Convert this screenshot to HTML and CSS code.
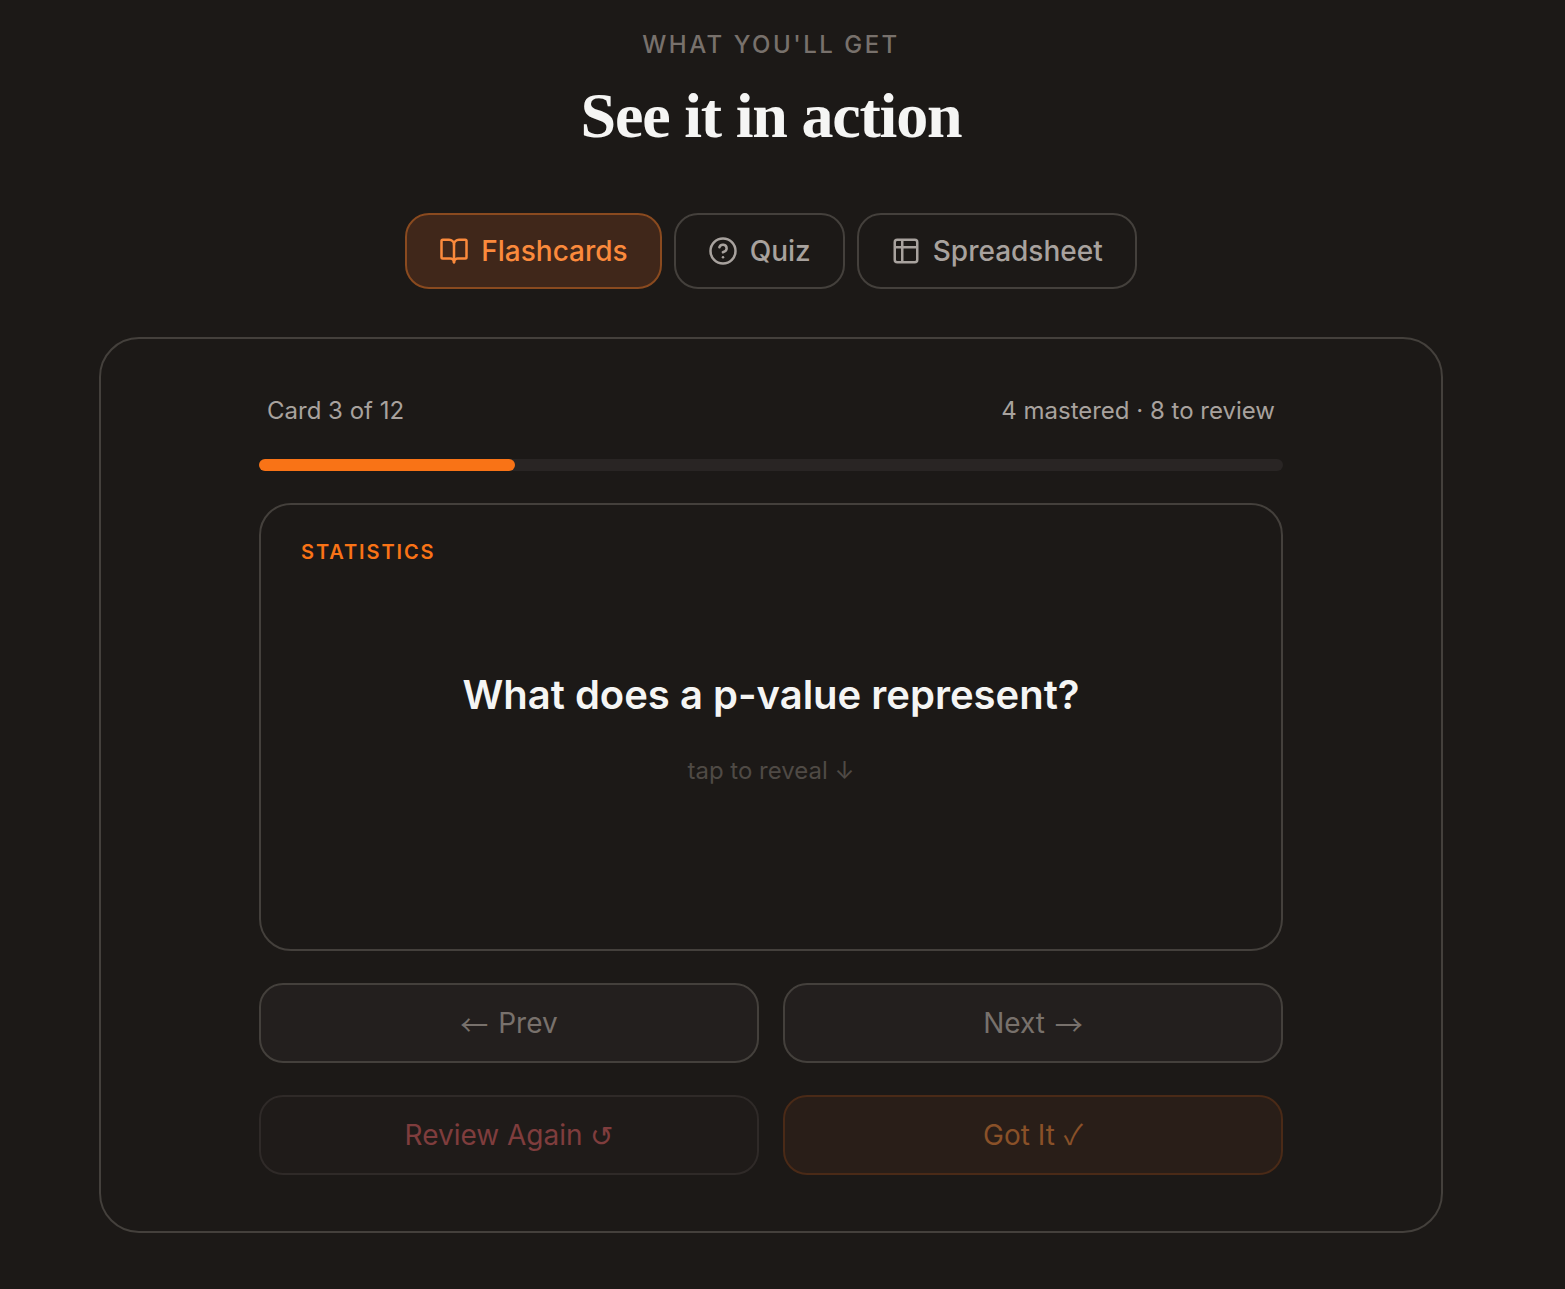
FILE: index.html
```html
<!DOCTYPE html>
<html>
<head>
  <title>See it in action</title>
  <link rel="stylesheet" href="styles.css">
</head>
<body>
  <section class="demo">
    <p class="eyebrow">WHAT YOU'LL GET</p>
    <h1 class="title">See it in action</h1>

    <div class="tabs">
      <button class="tab active">
        <svg class="tab-icon" viewBox="0 0 24 24"><path d="M12 7v14"/><path d="M3 18a1 1 0 0 1-1-1V4a1 1 0 0 1 1-1h5a4 4 0 0 1 4 4 4 4 0 0 1 4-4h5a1 1 0 0 1 1 1v13a1 1 0 0 1-1 1h-6a3 3 0 0 0-3 3 3 3 0 0 0-3-3z"/></svg>
        Flashcards
      </button>
      <button class="tab">
        <svg class="tab-icon" viewBox="0 0 24 24"><circle cx="12" cy="12" r="10"/><path d="M9.09 9a3 3 0 0 1 5.83 1c0 2-3 3-3 3"/><path d="M12 17h.01"/></svg>
        Quiz
      </button>
      <button class="tab">
        <svg class="tab-icon" viewBox="0 0 24 24"><path d="M9 3H5a2 2 0 0 0-2 2v4m6-6h10a2 2 0 0 1 2 2v4M9 3v18m0 0h10a2 2 0 0 0 2-2V9M9 21H5a2 2 0 0 1-2-2V9m0 0h18"/></svg>
        Spreadsheet
      </button>
    </div>

    <div class="panel">
      <div class="deck">
        <div class="deck-info">
          <span>Card 3 of 12</span>
          <span>4 mastered · 8 to review</span>
        </div>
        <div class="progress"><div class="progress-fill" style="width: 25%"></div></div>

        <div class="card">
          <div class="card-tag">STATISTICS</div>
          <div class="card-body">
            <div class="question">What does a p-value represent?</div>
            <div class="hint">tap to reveal ↓</div>
          </div>
        </div>

        <div class="actions">
          <button class="action"><span class="glyph arrow-left">←</span> Prev</button>
          <button class="action">Next <span class="glyph arrow-right">→</span></button>
          <button class="action again">Review Again <span class="glyph undo">↺</span></button>
          <button class="action got">Got It <span class="glyph check">✓</span></button>
        </div>
      </div>
    </div>
  </section>
</body>
</html>
```

FILE: styles.css
```css
* {
  box-sizing: border-box;
}
body {
  margin: 0;
  background-color: #1c1917;
  font-family: Inter, "Liberation Sans", sans-serif;
}
button {
  font-family: inherit;
}
.demo {
  width: 1542px;
  padding-top: 30px;
  padding-bottom: 56px;
  display: flex;
  flex-direction: column;
  align-items: center;
}
.eyebrow {
  margin: 0;
  font-size: 24px;
  line-height: 30px;
  font-weight: 500;
  letter-spacing: 2.5px;
  color: #78716c;
}
.title {
  margin: 20px 0 0;
  font-family: "Liberation Serif", serif;
  font-size: 64px;
  line-height: 72px;
  font-weight: 700;
  letter-spacing: -1.2px;
  color: #f5f5f4;
}
.tabs {
  display: flex;
  gap: 12px;
  margin-top: 61px;
}
.tab {
  height: 76px;
  padding: 0 32px;
  display: flex;
  align-items: center;
  gap: 12px;
  font-size: 28px;
  font-weight: 500;
  color: #a8a29e;
  background-color: transparent;
  border: 2px solid #44403c;
  border-radius: 24px;
}
.tab.active {
  color: #fb8a3c;
  background-color: #40271a;
  border-color: #8a4a1f;
}
.tab-icon {
  width: 30px;
  height: 30px;
  fill: none;
  stroke: currentColor;
  stroke-width: 2;
  stroke-linecap: round;
  stroke-linejoin: round;
}
.panel {
  width: 1344px;
  height: 896px;
  margin-top: 48px;
  padding-top: 48px;
  border: 2px solid #44403c;
  border-radius: 40px;
}
.deck {
  width: 1024px;
  margin: 0 auto;
}
.deck-info {
  display: flex;
  justify-content: space-between;
  padding: 8px 8px 0;
  font-size: 24px;
  line-height: 32px;
  color: #a8a29e;
}
.progress {
  height: 12px;
  margin-top: 32px;
  background-color: #292524;
  border-radius: 6px;
}
.progress-fill {
  height: 100%;
  background-color: #f97316;
  border-radius: 6px;
}
.card {
  height: 448px;
  margin-top: 32px;
  padding: 35px 40px;
  border: 2px solid #44403c;
  border-radius: 32px;
  display: flex;
  flex-direction: column;
}
.card-tag {
  font-size: 20px;
  line-height: 24px;
  font-weight: 600;
  letter-spacing: 1.9px;
  color: #f97316;
}
.card-body {
  margin-top: 107px;
  text-align: center;
}
.question {
  font-size: 40px;
  line-height: 48px;
  font-weight: 600;
  color: #f5f5f4;
}
.hint {
  margin-top: 36px;
  font-size: 24px;
  line-height: 32px;
  color: #4f4a45;
}
.actions {
  display: grid;
  grid-template-columns: 1fr 1fr;
  gap: 32px 24px;
  margin-top: 32px;
}
.action {
  height: 80px;
  font-size: 28px;
  color: #78716c;
  background-color: #231f1e;
  border: 2px solid #44403c;
  border-radius: 24px;
}
.action.again {
  color: #7f3d3d;
  background-color: #1f1b19;
  border-color: #2f2a28;
}
.action.got {
  color: #8a5128;
  background-color: #291e18;
  border-color: #4a2a17;
}
.glyph {
  font-family: "Noto Sans CJK SC", sans-serif;
  line-height: 0;
}
.arrow-left {
  margin-right: 2px;
  vertical-align: -3px;
}
.arrow-right {
  margin-left: 2px;
  vertical-align: -3px;
}
.undo {
  vertical-align: -1px;
}
.check {
  margin-left: 1px;
}
```
